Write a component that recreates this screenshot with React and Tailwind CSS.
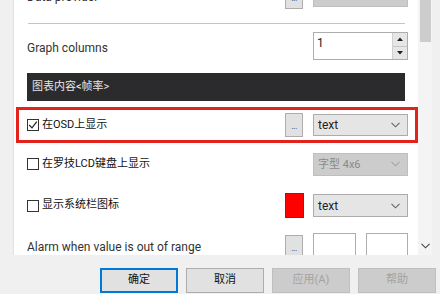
import React from "react";

const font = { fontFamily: 'Roboto, "Noto Sans CJK SC", sans-serif' };

function Chevron({ color = "#555" }) {
  return (
    <svg width="9" height="6" viewBox="0 0 9 6" className="shrink-0">
      <polyline points="0.5,0.8 4.5,4.8 8.5,0.8" fill="none" stroke={color} strokeWidth="1.1" />
    </svg>
  );
}

function Dots() {
  return (
    <div className="w-[18px] h-[24px] shrink-0 bg-[#e1e1e1] border border-[#adadad] flex items-end justify-center pb-[5px]">
      <span className="text-[9px] leading-none text-[#333] tracking-[-0.5px]">...</span>
    </div>
  );
}

function Select({ text, disabled, h = "h-[22px]", size = "text-[12px]" }) {
  return (
    <div
      className={`w-[95px] ${h} shrink-0 flex items-center justify-between pl-[4px] pr-[7px] border ${
        disabled ? "bg-[#cccccc] border-[#bfbfbf] text-[#8a8a8a]" : "bg-[#e5e5e5] border-[#acacac] text-[#222]"
      } ${size}`}
    >
      <span className="leading-none">{text}</span>
      <Chevron color={disabled ? "#a5a5a5" : "#666"} />
    </div>
  );
}

function Check({ checked }) {
  return (
    <div className="w-[12px] h-[12px] shrink-0 border border-[#333] bg-white flex items-center justify-center">
      {checked && (
        <svg width="10" height="10" viewBox="0 0 10 10">
          <polyline points="1.2,5 4,7.8 8.8,1.6" fill="none" stroke="#222" strokeWidth="1.2" />
        </svg>
      )}
    </div>
  );
}

function Button({ children, variant }) {
  const cls =
    variant === "primary"
      ? "bg-[#e1e1e1] border-2 border-[#0078d7] text-[#111]"
      : variant === "disabled"
      ? "bg-[#cccccc] border border-[#bfbfbf] text-[#a3a3a3]"
      : "bg-[#e1e1e1] border border-[#adadad] text-[#111]";
  return (
    <div className={`w-[78px] h-[25px] flex items-center justify-center text-[11px] ${cls}`}>{children}</div>
  );
}

export default function App() {
  return (
    <div className="w-[440px] h-[294px] bg-[#f0f0f0] flex flex-col overflow-hidden text-[#222]" style={font}>
      <div className="flex h-[255px] shrink-0">
        <div className="w-[14px] shrink-0 border-r border-[#e2e2e2]" />
        <div className="w-[404px] shrink-0 bg-white overflow-hidden flex flex-col pl-[13px] pr-[10px]">
          {/* Data provider row (scrolled, partially hidden) */}
          <div className="mt-[-15px] h-[24px] shrink-0 flex items-start">
            <span className="flex-1 text-[12px] leading-[24px] text-[#333]">Data provider</span>
            <Dots />
            <div className="w-[10px]" />
            <Select text="" disabled />
          </div>
          <div className="mt-[14px] h-px shrink-0 bg-[#c4c4c4] ml-[1px] mr-[3px]" />
          {/* Graph columns */}
          <div className="mt-[8px] h-[28px] shrink-0 flex items-center">
            <span className="flex-1 text-[12px] text-[#333] mt-[4px]">Graph columns</span>
            <div className="w-[95px] h-[28px] flex border border-[#adadad]">
              <div className="flex-1 bg-white pl-[3px] pt-[3px] text-[12px] leading-[14px] text-[#222]">1</div>
              <div className="w-[15px] flex flex-col border-l border-[#d0d0d0]">
                <div className="flex-1 bg-[#e6e6e6] flex items-center justify-center border-b border-[#c8c8c8]">
                  <svg width="6" height="4" viewBox="0 0 6 4">
                    <polygon points="0,4 3,0.5 6,4" fill="#222" />
                  </svg>
                </div>
                <div className="flex-1 bg-[#e6e6e6] flex items-center justify-center">
                  <svg width="6" height="4" viewBox="0 0 6 4">
                    <polygon points="0,0 3,3.5 6,0" fill="#222" />
                  </svg>
                </div>
              </div>
            </div>
          </div>
          {/* Dark header */}
          <div className="mt-[13px] h-[28px] shrink-0 mr-[3px] bg-[#2b2b2d] flex items-center pl-[5px]">
            <span className="text-[11px] text-[#e6e6e6]">图表内容&lt;帧率&gt;</span>
          </div>
          {/* Highlighted OSD row */}
          <div className="mt-[6px] h-[36px] shrink-0 -ml-[11px] -mr-[10px] border-[3px] border-[#e3231b] flex items-center pl-[8px] pr-[7px]">
            <Check checked />
            <span className="ml-[3px] flex-1 text-[11px] text-[#111]">在OSD上显示</span>
            <Dots />
            <div className="w-[10px]" />
            <Select text="text" />
          </div>
          {/* LCD row */}
          <div className="mt-[9px] h-[24px] shrink-0 flex items-center">
            <Check />
            <span className="ml-[3px] flex-1 text-[11px] text-[#111]">在罗技LCD键盘上显示</span>
            <Select text="字型 4x6" disabled h="h-[23px]" size="text-[11px]" />
          </div>
          {/* Tray row */}
          <div className="mt-[17px] h-[25px] shrink-0 flex items-center">
            <Check />
            <span className="ml-[3px] flex-1 text-[11px] text-[#111]">显示系统栏图标</span>
            <div className="w-[19px] h-[25px] bg-[#ff0000] border border-[#d80000]" />
            <div className="w-[9px]" />
            <Select text="text" h="h-[23px]" />
          </div>
          {/* Alarm row */}
          <div className="mt-[15px] h-[28px] shrink-0 flex items-start">
            <span className="flex-1 mt-[6px] text-[12px] leading-[16px] text-[#333]">Alarm when value is out of range</span>
            <div className="mt-[2px]">
              <Dots />
            </div>
            <div className="w-[10px]" />
            <div className="w-[43px] h-[28px] border border-[#adadad] bg-white" />
            <div className="w-[10px]" />
            <div className="w-[42px] h-[28px] border border-[#adadad] bg-white" />
          </div>
        </div>
        {/* Scrollbar */}
        <div className="w-[14px] shrink-0 bg-[#f4f4f4] flex flex-col items-center">
          <div className="w-[11px] h-[42px] bg-[#cdcdcd]" />
          <div className="flex-1" />
          <div className="mb-[6px]">
            <Chevron color="#444" />
          </div>
        </div>
        <div className="flex-1" />
      </div>
      {/* Footer */}
      <div className="flex-1 flex justify-end items-start pt-[13px] pr-[4px] gap-[8px]">
        <Button variant="primary">确定</Button>
        <Button>取消</Button>
        <Button variant="disabled">应用(A)</Button>
        <Button variant="disabled">帮助</Button>
      </div>
    </div>
  );
}
